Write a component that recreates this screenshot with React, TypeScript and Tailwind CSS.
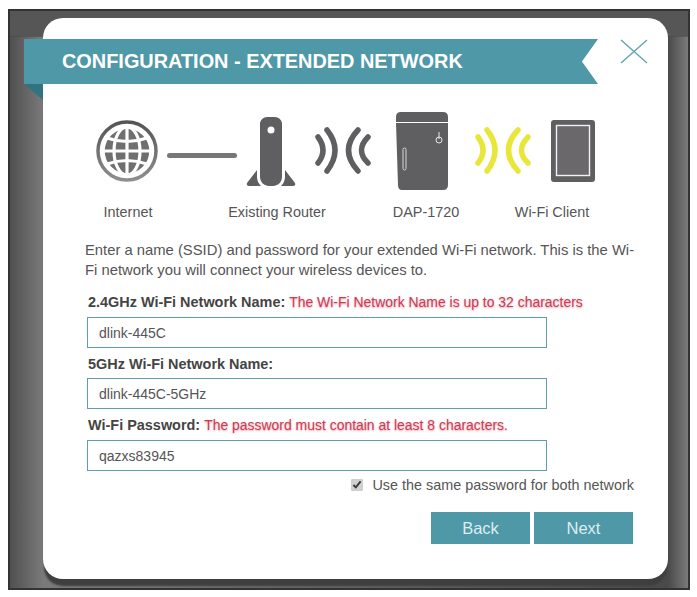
const labelClass = "font-bold text-[14.45px] leading-[20px] text-[#444]"
const errorClass = "font-normal text-[13.95px] text-[#cf3a52] [text-shadow:0_1px_2px_rgba(207,58,82,0.5)]"
const inputClass = "block w-[460px] h-[31px] border border-[#5f9fad] bg-white px-[11px] text-[14px] text-[#555] outline-none"
const buttonClass = "w-[99px] h-[32px] bg-[#4f98a8] text-[16.5px] text-[#dceef1]"

function Waves({ color }: { color: string }) {
  return (
    <svg width="56" height="48" viewBox="0 0 56 48" fill="none" stroke={color} strokeWidth="5.5" strokeLinecap="round">
      <path d="M3 10Q13 23.5 3 36" />
      <path d="M12 3Q28 23 12 44" />
      <path d="M43 3Q24 23 43 44" />
      <path d="M53 10Q40 23.5 53 36" />
    </svg>
  )
}

function Globe() {
  return (
    <svg width="62" height="62" viewBox="0 0 62 62" fill="none">
      <defs>
        <linearGradient id="globeRing" x1="0" y1="0" x2="0" y2="1">
          <stop offset="0" stopColor="#555555" />
          <stop offset="1" stopColor="#8e8e8e" />
        </linearGradient>
      </defs>
      <circle cx="31" cy="31" r="29" stroke="url(#globeRing)" strokeWidth="3.5" />
      <circle cx="31" cy="31" r="24" fill="#6f6f6f" stroke="#ffffff" strokeWidth="3.5" />
      <g stroke="#ffffff" strokeWidth="3.2">
        <ellipse cx="31" cy="31" rx="13" ry="24" />
        <path d="M31 7V55M7 31H55M11 18Q31 25 51 18M11 44Q31 37 51 44" />
      </g>
    </svg>
  )
}

function Router() {
  return (
    <svg width="50" height="72" viewBox="0 0 50 72" fill="#5f5e60">
      <path d="M14 7a7 7 0 0 1 7-6h8a7 7 0 0 1 7 6v54q0 7-8 9h-6q-8-2-8-9Z" />
      <circle cx="25" cy="14" r="3.5" fill="#ffffff" />
      <path d="M1 67 11 54v7q0 5 4 9H3q-3 0-2-3Z" />
      <path d="M49 67 39 54v7q0 5-4 9h12q3 0 2-3Z" />
    </svg>
  )
}

function Extender() {
  return (
    <svg width="52" height="80" viewBox="0 0 52 80">
      <path d="M0 6Q0 1 5 1H47Q52 1 52 6V74Q52 79 47 79H6Q2 79 2 74L0 12Z" fill="#5f5e60" />
      <path d="M0 11.5H52" stroke="#ffffff" strokeWidth="1.2" />
      <rect x="7" y="37" width="3" height="22" rx="1.5" fill="#5f5e60" stroke="#d8d8d8" />
      <circle cx="43" cy="29" r="3" fill="none" stroke="#e8e8e8" strokeWidth="1" />
      <path d="M43 21V28" stroke="#e8e8e8" strokeWidth="1" />
    </svg>
  )
}

function Tablet() {
  return (
    <svg width="44" height="62" viewBox="0 0 44 62">
      <rect x="0" y="0" width="44" height="62" rx="3" fill="#5f5e60" />
      <rect x="5.5" y="5.5" width="33" height="50" fill="#6a686a" stroke="#f2f2f2" strokeWidth="1.4" />
    </svg>
  )
}

function CloseIcon() {
  return (
    <svg width="28" height="25" viewBox="0 0 28 25" stroke="#5fa6ae" strokeWidth="1.4" fill="none">
      <path d="M1 1 27 24M27 1 1 24" />
    </svg>
  )
}

export default function App() {
  return (
    <div className="w-[697px] h-[597px] bg-white pt-[9px] pl-[8px] font-['Liberation_Sans',Arial,sans-serif]">
      <div className="w-[682px] h-[581px] border-2 border-[#333] pt-[7px] pl-[33px] bg-[linear-gradient(to_bottom,#565656_0,#565656_25px,#444_25px,transparent_26px),linear-gradient(to_right,#505050_0,#7a7a7a_33px,#4a4a4a_658px,#7a7a7a_678px)]">
        <div className="relative w-[625px] h-[561px] bg-white rounded-[20px] pt-[21px] shadow-[0_8px_2px_-1px_#3f3f3f]">
          {/* Ribbon header */}
          <div className="relative -ml-[19px] w-[574px]">
            <div className="h-[45px] bg-[#4f98a8] pl-[38px] flex items-center [clip-path:polygon(0_0,100%_0,97.2%_50%,100%_100%,0_100%)]">
              <h1 className="text-[19.9px] font-bold text-white">CONFIGURATION - EXTENDED NETWORK</h1>
            </div>
            <div className="w-[19px] h-[16px] bg-[#2f7480] [clip-path:polygon(0_0,100%_0,100%_100%)]"></div>
          </div>
          <button className="absolute left-[577px] top-[21px]">
            <CloseIcon />
          </button>

          {/* Network diagram */}
          <div className="flex items-center h-[80px] mt-[11px] pl-[53px]">
            <Globe />
            <div className="ml-[9px] w-[70px] h-[5px] rounded-full bg-[#777] mt-[9px]"></div>
            <div className="ml-[9px] mt-[2px]"><Router /></div>
            <div className="ml-[19px]"><Waves color="#5f5e60" /></div>
            <div className="ml-[25px]"><Extender /></div>
            <div className="ml-[27px]"><Waves color="#e9e63a" /></div>
            <div className="ml-[20px]"><Tablet /></div>
          </div>
          <div className="flex mt-[11px] pl-[25px] text-[14.4px] leading-[20px] text-[#555]">
            <span className="w-[120px] text-center">Internet</span>
            <span className="w-[178px] text-center">Existing Router</span>
            <span className="w-[120px] text-center">DAP-1720</span>
            <span className="w-[132px] text-center">Wi-Fi Client</span>
          </div>

          {/* Form */}
          <p className="mt-[18px] ml-[42px] w-[556px] text-[14.8px] leading-[20px] text-[#555]">
            Enter a name (SSID) and password for your extended Wi-Fi network. This is the Wi-Fi network you will connect your wireless devices to.
          </p>
          <div className="ml-[44px] mt-[12px] flex flex-col">
            <label className={`${labelClass} pl-[1px]`}>
              2.4GHz Wi-Fi Network Name: <span className={errorClass}>The Wi-Fi Network Name is up to 32 characters</span>
            </label>
            <input className={`${inputClass} mt-[5px]`} defaultValue="dlink-445C" />
            <label className={`${labelClass} pl-[1px] mt-[6px]`}>5GHz Wi-Fi Network Name:</label>
            <input className={`${inputClass} mt-[4px]`} defaultValue="dlink-445C-5GHz" />
            <label className={`${labelClass} pl-[1px] mt-[6px]`}>
              Wi-Fi Password: <span className={errorClass}>The password must contain at least 8 characters.</span>
            </label>
            <input className={`${inputClass} mt-[5px]`} defaultValue="qazxs83945" />
          </div>
          <div className="mt-[4px] pr-[34px] flex justify-end items-center gap-[9px] text-[14.4px] leading-[20px] text-[#555]">
            <input type="checkbox" defaultChecked className="w-[12px] h-[12px] accent-[#d0d0d0]" />
            <span>Use the same password for both network</span>
          </div>
          <div className="mt-[17px] pr-[35px] flex justify-end gap-[4px]">
            <button className={buttonClass}>Back</button>
            <button className={buttonClass}>Next</button>
          </div>
        </div>
      </div>
    </div>
  )
}
